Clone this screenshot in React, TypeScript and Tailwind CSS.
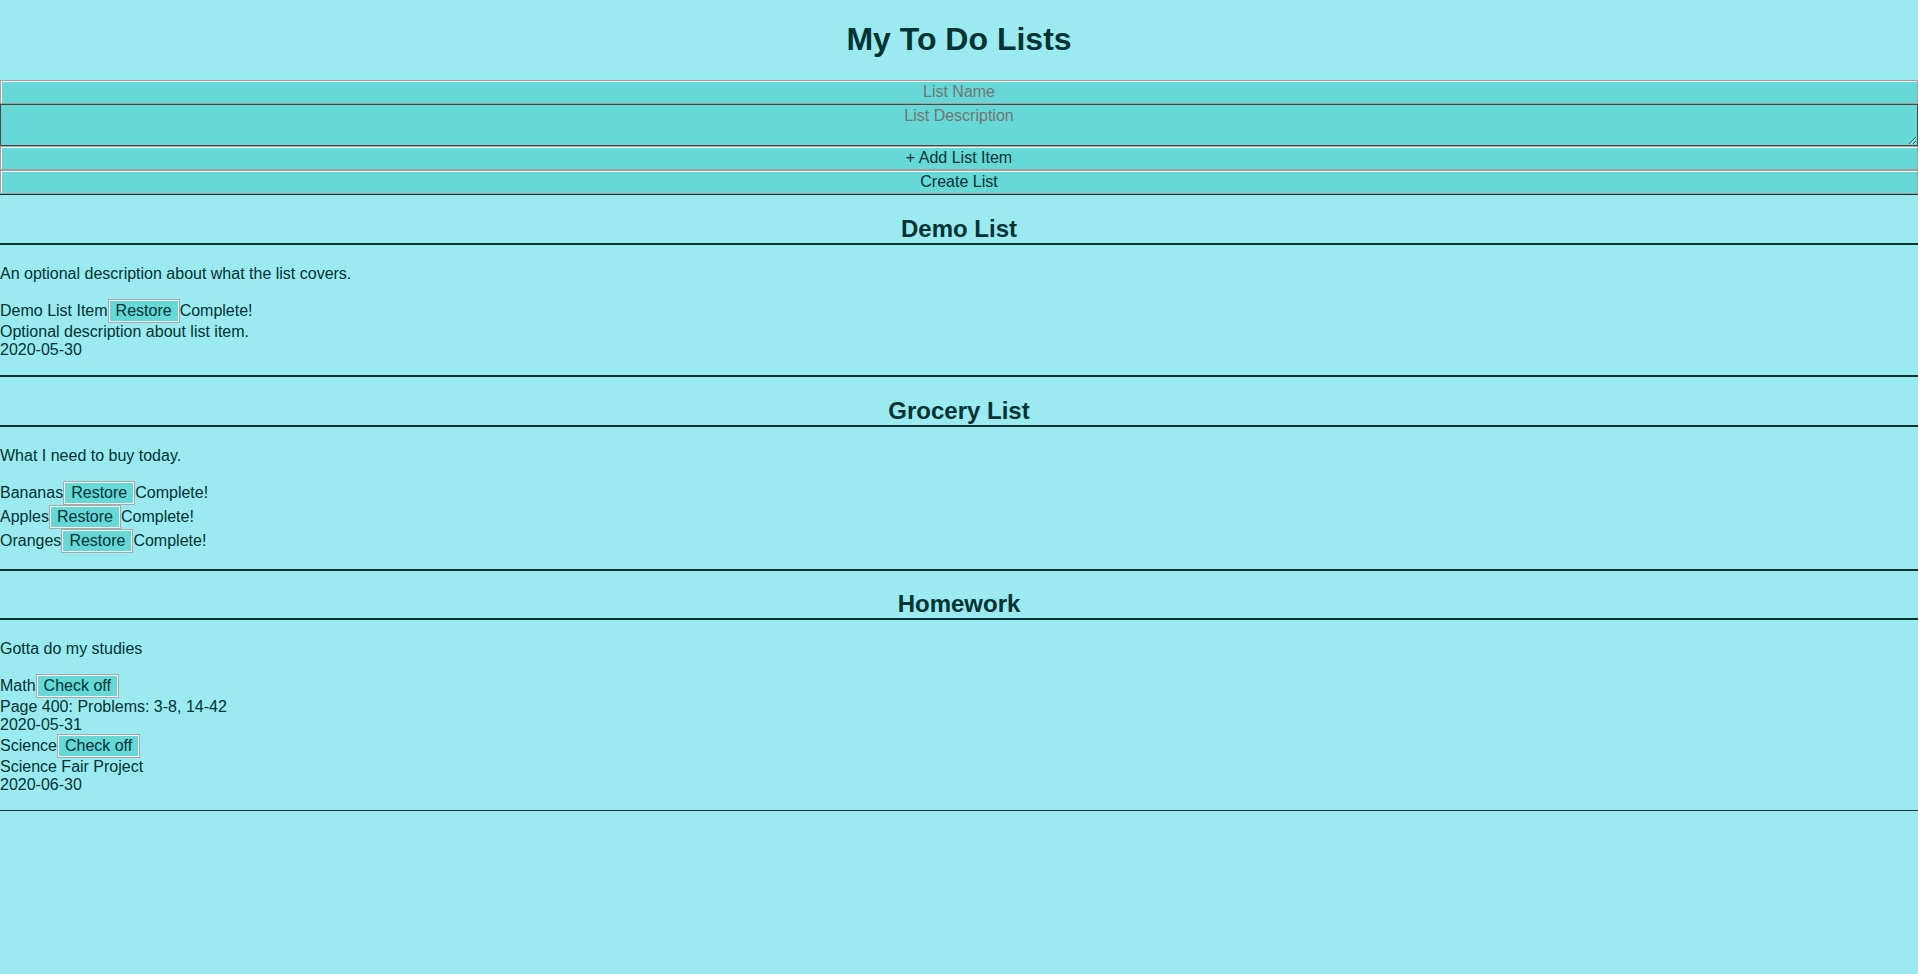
import React from "react";

const fieldBase =
  "block w-full bg-[#66d8d6] border border-[#a0a0a0] shadow-[inset_1px_1px_0_#f4f4f4] text-center text-[16px] leading-[normal] text-[#003333]";

const btn =
  "inline-block bg-[#66d8d6] border border-[#a8a8a8] shadow-[inset_0_0_0_1px_#f2f2f2] px-[7px] py-[2px] text-[16px] leading-[normal] text-[#003333] align-baseline";

type Item = {
  name: string;
  done: boolean;
  desc?: string;
  date?: string;
};

type List = { title: string; desc: string; items: Item[] };

const lists: List[] = [
  {
    title: "Demo List",
    desc: "An optional description about what the list covers.",
    items: [
      {
        name: "Demo List Item",
        done: true,
        desc: "Optional description about list item.",
        date: "2020-05-30",
      },
    ],
  },
  {
    title: "Grocery List",
    desc: "What I need to buy today.",
    items: [
      { name: "Bananas", done: true },
      { name: "Apples", done: true },
      { name: "Oranges", done: true },
    ],
  },
  {
    title: "Homework",
    desc: "Gotta do my studies",
    items: [
      {
        name: "Math",
        done: false,
        desc: "Page 400: Problems: 3-8, 14-42",
        date: "2020-05-31",
      },
      {
        name: "Science",
        done: false,
        desc: "Science Fair Project",
        date: "2020-06-30",
      },
    ],
  },
];

export default function App() {
  return (
    <div
      className="flow-root min-h-screen bg-[#9beaef] text-[#003333] text-[16px] leading-[normal]"
      style={{ fontFamily: '"Liberation Sans", Arial, sans-serif' }}
    >
      <h1 className="text-center text-[32px] font-bold mt-[21.44px] mb-[21.44px] leading-[normal]">
        My To Do Lists
      </h1>
      <input
        className={`${fieldBase} h-[24px] placeholder:text-[#757575]`}
        placeholder="List Name"
      />
      <textarea
        className="block w-full h-[42px] bg-[#66d8d6] border border-[#4a4a4a] px-[2px] py-[2px] text-center text-[16px] leading-[normal] text-[#003333] placeholder:text-[#757575]"
        placeholder="List Description"
      />
      <button className={`${fieldBase} h-[24px]`}>+ Add List Item</button>
      <button className={`${fieldBase} h-[24px]`}>Create List</button>

      {lists.map((l) => (
        <div key={l.title} className="border-y border-[#003333]">
          <h2 className="text-center text-[24px] font-bold my-[19.92px] leading-[normal] border-b-2 border-[#003333]">
            {l.title}
          </h2>
          <p className="my-4">{l.desc}</p>
          <div className="my-4">
            {l.items.map((it) => (
              <div key={it.name}>
                <div>
                  {it.name}
                  <button className={btn}>{it.done ? "Restore" : "Check off"}</button>
                  {it.done ? "Complete!" : null}
                </div>
                {it.desc ? <div>{it.desc}</div> : null}
                {it.date ? <div>{it.date}</div> : null}
              </div>
            ))}
          </div>
        </div>
      ))}
    </div>
  );
}
